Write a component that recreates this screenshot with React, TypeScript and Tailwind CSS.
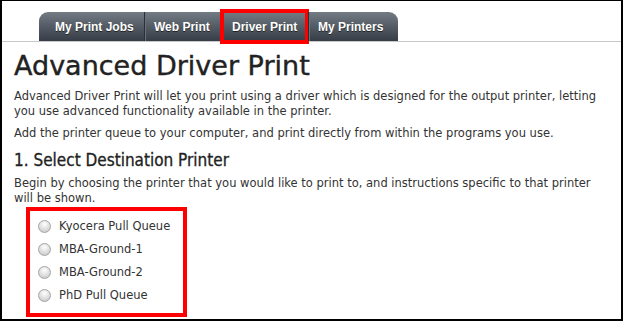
import React from 'react';

const tabs = [
  { label: 'My Print Jobs', cls: 'w-[105px] pl-[16px]' },
  { label: 'Web Print', cls: 'w-[77px] pl-[9px] border-l border-[#2a2f36] shadow-[inset_1px_0_0_#68707a]' },
  { label: 'Driver Print', cls: 'w-[87px] pl-[10px] border-l border-[#2a2f36] shadow-[inset_1px_0_0_#68707a]' },
  { label: 'My Printers', cls: 'w-[90px] pl-[9px] border-l border-[#2a2f36] shadow-[inset_1px_0_0_#68707a]' },
];
const printers = ['Kyocera Pull Queue', 'MBA-Ground-1', 'MBA-Ground-2', 'PhD Pull Queue'];

const App: React.FC = () => {
  return (
    <div className="w-[623px] h-[321px] overflow-hidden bg-white border-2 border-t border-black font-['DejaVu_Sans',sans-serif] text-[#333]">
      {/* tab strip */}
      <div className="pt-[11px] pl-[37px] border-b border-[#c8c8c8]">
        <div className="flex h-[29px] w-fit rounded-t-[9px] bg-gradient-to-b from-[#737b85] to-[#363d46] font-['Liberation_Sans',Arial,sans-serif] text-[12px] font-bold text-white">
          {tabs.map((t) => (
            <div key={t.label} className={`relative flex items-center ${t.cls}`}>
              <span className="[text-shadow:0_1px_0_#222]">{t.label}</span>
              {t.label === 'Driver Print' && (
                <div className="absolute -top-[3px] -bottom-[3px] -left-[2px] -right-[1px] border-4 border-[#f00]" />
              )}
            </div>
          ))}
        </div>
      </div>

      <div className="pl-[12px] pr-[10px]">
        <h1 className="mt-[7px] text-[27px] leading-[34px] text-[#222] [-webkit-text-stroke:0.4px_#222]">Advanced Driver Print</h1>
        <p className="mt-[6px] text-[11.5px] leading-[15px]">
          Advanced Driver Print will let you print using a driver which is designed for the output printer, letting you use advanced functionality available in the printer.
        </p>
        <p className="mt-[7px] text-[11.5px] leading-[15px]">
          Add the printer queue to your computer, and print directly from within the programs you use.
        </p>
        <h2 className="mt-[8px] font-['DejaVu_Sans_Condensed','DejaVu_Sans',sans-serif] text-[17px] leading-[22px] text-[#222] [-webkit-text-stroke:0.3px_#222]">1. Select Destination Printer</h2>
        <p className="mt-[5px] text-[11.5px] leading-[15px]">
          Begin by choosing the printer that you would like to print to, and instructions specific to that printer will be shown.
        </p>
        <div className="mt-[1px] ml-[12px] w-[161px] border-4 border-[#f00] pt-[4px] pb-[6px] pl-[8px]">
          {printers.map((p) => (
            <label key={p} className="flex h-[23px] items-center gap-[8px] text-[11.5px]">
              <span className="h-[13px] w-[13px] shrink-0 rounded-full border border-[#a5a5a5] bg-[radial-gradient(circle_at_50%_30%,#ffffff,#d4d4d4_70%,#bdbdbd)]" />
              <span>{p}</span>
            </label>
          ))}
        </div>
      </div>
    </div>
  );
};

export default App;
